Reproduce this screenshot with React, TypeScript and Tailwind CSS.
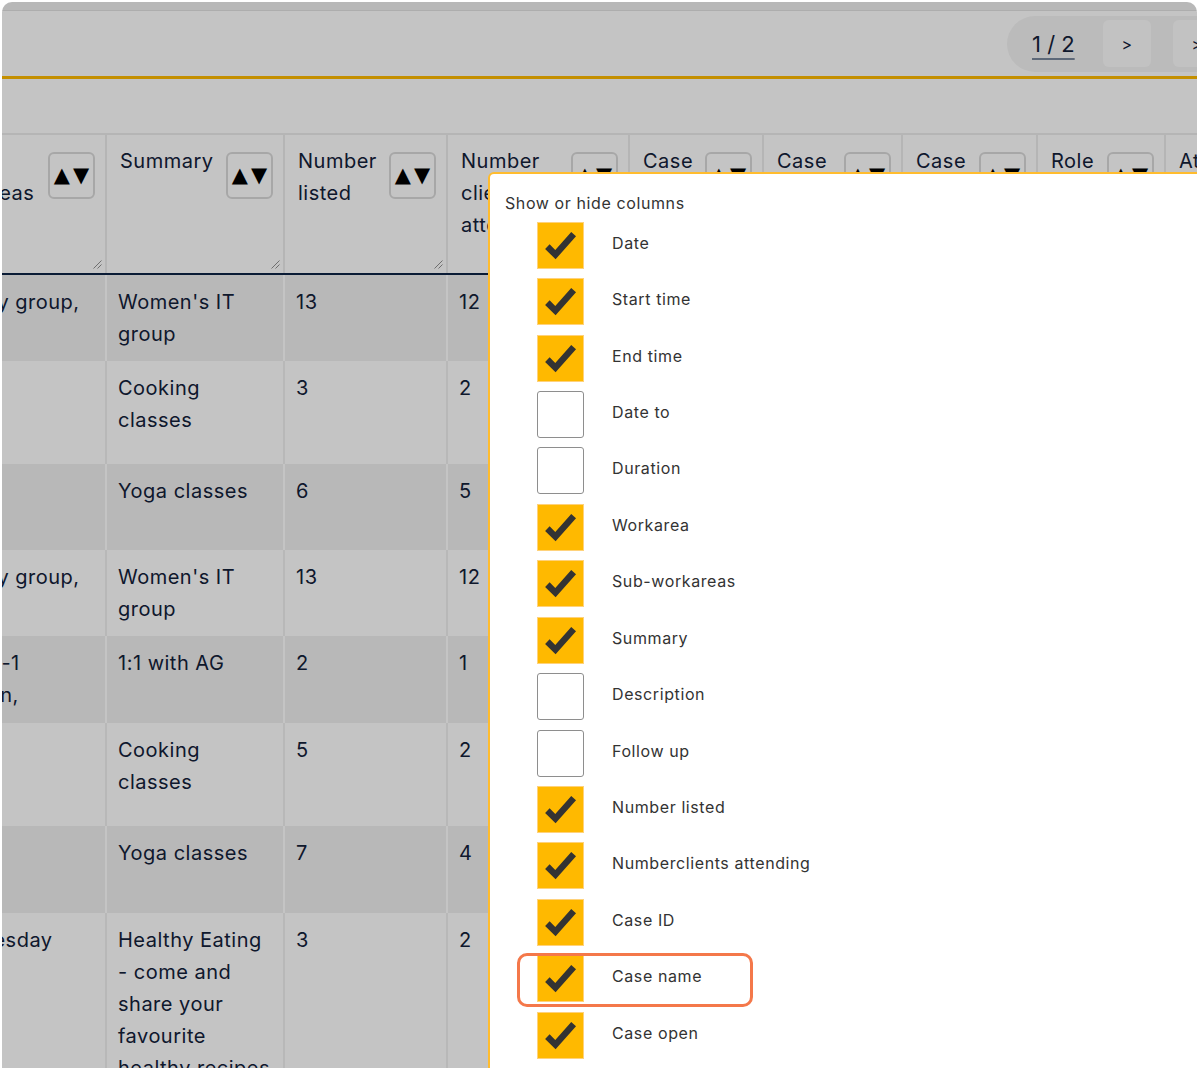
import React from "react";

type Row = { c0: React.ReactNode; summary: string; listed: string; attending: string; h: string; odd: boolean };

const rows: Row[] = [
  { c0: "Weekly group,", summary: "Women's IT group", listed: "13", attending: "12", h: "h-[87px]", odd: true },
  { c0: "", summary: "Cooking classes", listed: "3", attending: "2", h: "h-[103px]", odd: false },
  { c0: "", summary: "Yoga classes", listed: "6", attending: "5", h: "h-[86px]", odd: true },
  { c0: "Weekly group,", summary: "Women's IT group", listed: "13", attending: "12", h: "h-[86px]", odd: false },
  { c0: <>Desk 1-1<br />session,</>, summary: "1:1 with AG", listed: "2", attending: "1", h: "h-[87px]", odd: true },
  { c0: "", summary: "Cooking classes", listed: "5", attending: "2", h: "h-[103px]", odd: false },
  { c0: "", summary: "Yoga classes", listed: "7", attending: "4", h: "h-[87px]", odd: true },
  {
    c0: "Wednesday",
    summary: "Healthy Eating - come and share your favourite healthy recipes",
    listed: "3",
    attending: "2",
    h: "h-[160px]",
    odd: false,
  },
];

const headers = [
  "Sub-workareas",
  "Summary",
  "Number listed",
  "Number clients attending",
  "Case ID",
  "Case name",
  "Case open",
  "Role",
  "Attended",
];

const columns = [
  { label: "Date", on: true },
  { label: "Start time", on: true },
  { label: "End time", on: true },
  { label: "Date to", on: false },
  { label: "Duration", on: false },
  { label: "Workarea", on: true },
  { label: "Sub-workareas", on: true },
  { label: "Summary", on: true },
  { label: "Description", on: false },
  { label: "Follow up", on: false },
  { label: "Number listed", on: true },
  { label: "Numberclients attending", on: true },
  { label: "Case ID", on: true },
  { label: "Case name", on: true, mark: true },
  { label: "Case open", on: true },
  { label: "Case closed", on: false },
];

const SortButton = () => (
  <button className="w-[47px] h-[47px] shrink-0 mt-[7px] rounded-md border-2 border-[#dadada] flex items-center justify-center gap-[3px] text-[21px] leading-none tracking-normal text-black font-['DejaVu_Sans',sans-serif]">
    <span>▲</span>
    <span>▼</span>
  </button>
);

const Grip = () => (
  <svg className="absolute right-[3px] bottom-[4px]" width="9" height="9" viewBox="0 0 9 9">
    <line x1="0.5" y1="8.5" x2="8.5" y2="0.5" stroke="#8f8f8f" strokeWidth="1" />
    <line x1="4.5" y1="8.5" x2="8.5" y2="4.5" stroke="#8f8f8f" strokeWidth="1" />
  </svg>
);

const Check = () => (
  <svg width="45" height="45" viewBox="0 0 24 24">
    <polyline points="5,12.6 9.3,16.9 19,5.9" fill="none" stroke="#333333" strokeWidth="3.4" strokeLinejoin="miter" />
  </svg>
);

const App = () => {
  return (
    <div className="w-[1200px] h-[1070px] bg-white pl-[2px] pr-[3px] pt-[2px] overflow-hidden">
      <div className="relative h-[1066px] rounded-t-[10px] overflow-hidden bg-white font-['Inter',sans-serif] text-[#13213a]">
        <div className="h-[9px] bg-[#f0f0f0] border-b border-[#e2e2e2]" />
        <div className="h-[65px] flex items-center justify-end">
          <div className="h-[56px] w-[200px] -mr-[10px] shrink-0 rounded-l-full bg-[#f4f4f4] flex items-center pl-[25px] whitespace-nowrap">
            <span className="text-[22px] leading-none underline decoration-2 underline-offset-[6px] decoration-[#7a889c] whitespace-nowrap">
              1 / 2
            </span>
            <button className="ml-[28px] w-[48px] h-[47px] shrink-0 rounded-md bg-[#fdfdfd] text-[16px] text-[#13213a]">&gt;</button>
            <button className="ml-[22px] w-[48px] h-[47px] shrink-0 rounded-md bg-[#fdfdfd] text-[16px] text-[#13213a]">&gt;</button>
          </div>
        </div>
        <div className="h-[3px] bg-[#ffba00]" />
        <div className="h-[54px]" />

        <table className="table-fixed border-collapse w-[1389px] ml-[-77px] text-[20px] leading-[32px] tracking-[0.5px]">
          <colgroup>
            <col className="w-[180px]" />
            <col className="w-[178px]" />
            <col className="w-[163px]" />
            <col className="w-[182px]" />
            <col className="w-[134px]" />
            <col className="w-[139px]" />
            <col className="w-[135px]" />
            <col className="w-[128px]" />
            <col className="w-[150px]" />
          </colgroup>
          <thead>
            <tr className="h-[140px]">
              {headers.map((h, i) => (
                <th
                  key={h}
                  className={`relative align-top text-left font-normal bg-white border-2 border-[#ececec] border-b-[#0e2445] pr-[10px] pt-[10px] ${
                    i === 0 ? "pl-[4px]" : "pl-[13px]"
                  }`}
                >
                  <div className="flex justify-between gap-2">
                    <span>{h}</span>
                    <SortButton />
                  </div>
                  <Grip />
                </th>
              ))}
            </tr>
          </thead>
          <tbody>
            {rows.map((r, i) => {
              const cell = r.odd
                ? "align-top pl-[11px] pr-3 pt-[11px] border-r-2 border-white"
                : "align-top pl-[11px] pr-3 pt-[11px] border-r-2 border-[#f0f0f0]";
              return (
                <tr key={i} className={`${r.h} ${r.odd ? "bg-[#f0f0f0]" : "bg-white"}`}>
                  <td className={cell}>{r.c0}</td>
                  <td className={cell}>{r.summary}</td>
                  <td className={cell}>{r.listed}</td>
                  <td className={cell}>{r.attending}</td>
                  <td className={cell}>12345</td>
                  <td className={cell}>Client</td>
                  <td className={cell}>Yes</td>
                  <td className={cell}>Lead</td>
                  <td className={cell}>Yes</td>
                </tr>
              );
            })}
          </tbody>
        </table>

        <div className="absolute inset-0 bg-black/[0.23]" />

        <div className="absolute left-[486px] top-[170px] right-[-12px] bottom-[-12px] bg-white border-2 border-[#ffbc2e] rounded-tl-md pl-[15px] pt-[17px] font-['Inter',sans-serif] text-[#333333] tracking-[0.6px]">
          <div className="text-[16px] leading-[24px]">Show or hide columns</div>
          <ul className="mt-[2px] ml-[32px]">
            {columns.map((c) => (
              <li key={c.label} className="relative h-[56.43px] flex items-center">
                {c.on ? (
                  <span className="w-[47px] h-[47px] shrink-0 bg-[#ffb900] border border-[#ffd27a] flex items-center justify-center">
                    <Check />
                  </span>
                ) : (
                  <span className="w-[47px] h-[47px] shrink-0 bg-white border-[1.5px] border-[#8e8e8e] rounded-[3px]" />
                )}
                <span className="ml-[28px] pb-[5px] text-[16px] leading-[24px]">{c.label}</span>
                {c.mark && (
                  <span className="absolute left-[-20px] top-[2.5px] w-[236px] h-[54px] rounded-[10px] border-[3px] border-[#f4784a]" />
                )}
              </li>
            ))}
          </ul>
        </div>
      </div>
    </div>
  );
};

export default App;
